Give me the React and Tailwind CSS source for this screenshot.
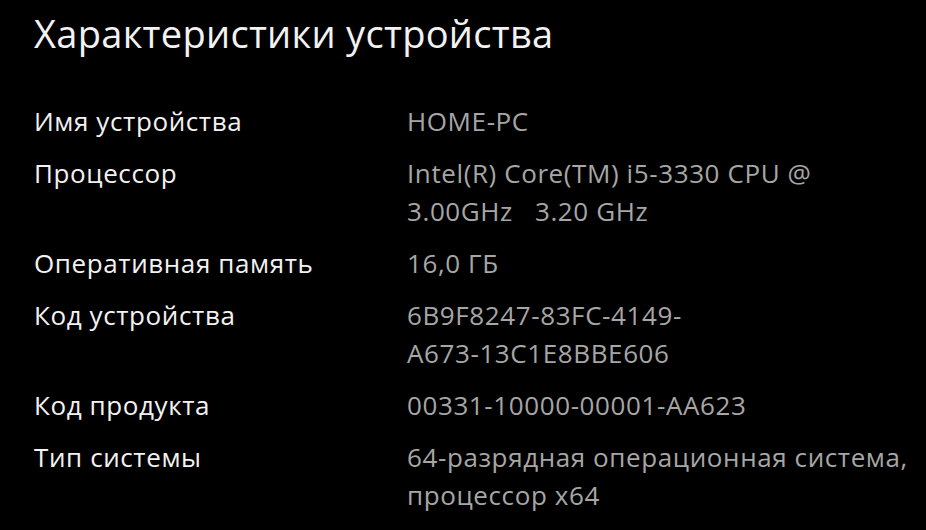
import React from 'react';

const specs = [
  { label: 'Имя устройства', value: ['HOME-PC'] },
  { label: 'Процессор', value: ['Intel(R) Core(TM) i5-3330 CPU @', '3.00GHz\u00a0\u00a0\u00a03.20 GHz'] },
  { label: 'Оперативная память', value: ['16,0 ГБ'] },
  { label: 'Код устройства', value: ['6B9F8247-83FC-4149-', 'A673-13C1E8BBE606'] },
  { label: 'Код продукта', value: ['00331-10000-00001-AA623'] },
  { label: 'Тип системы', value: ['64-разрядная операционная система,', 'процессор x64'] }
];

const App = () => {
  return (
    <div
      className="w-[926px] h-[530px] bg-black overflow-hidden pl-[34px] pt-[8px]"
      style={{ fontFamily: '"Open Sans", "Noto Sans", sans-serif' }}
    >
      <h1 className="text-[38px] leading-[50px] text-[#f2f2f2] font-normal tracking-[0.3px]">
        Характеристики устройства
      </h1>

      <div className="mt-[44px] flex flex-col gap-[14px]">
        {specs.map((spec) => (
          <div key={spec.label} className="flex text-[26px] leading-[38px] tracking-[0.6px]">
            <div className="w-[373px] shrink-0 text-[#f2f2f2]">{spec.label}</div>
            <div className="text-[#a6a6a6]">
              {spec.value.map((line) => (
                <div key={line} className="whitespace-nowrap">{line}</div>
              ))}
            </div>
          </div>
        ))}
      </div>
    </div>
  );
};

export default App;
